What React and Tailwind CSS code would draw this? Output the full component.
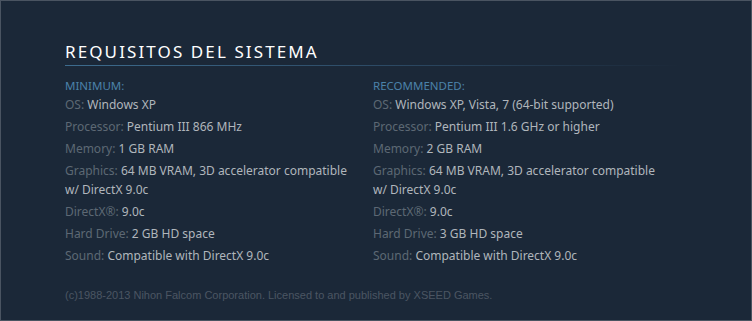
import React from "react";

const minimum = [
  ["OS:", "Windows XP"],
  ["Processor:", "Pentium III 866 MHz"],
  ["Memory:", "1 GB RAM"],
  ["Graphics:", "64 MB VRAM, 3D accelerator compatible w/ DirectX 9.0c"],
  ["DirectX®:", "9.0c"],
  ["Hard Drive:", "2 GB HD space"],
  ["Sound:", "Compatible with DirectX 9.0c"],
];

const recommended = [
  ["OS:", "Windows XP, Vista, 7 (64-bit supported)"],
  ["Processor:", "Pentium III 1.6 GHz or higher"],
  ["Memory:", "2 GB RAM"],
  ["Graphics:", "64 MB VRAM, 3D accelerator compatible w/ DirectX 9.0c"],
  ["DirectX®:", "9.0c"],
  ["Hard Drive:", "3 GB HD space"],
  ["Sound:", "Compatible with DirectX 9.0c"],
];

function ReqColumn({ title, items }) {
  return (
    <div className="w-[284px]">
      <div className="text-[11.5px] leading-[18px] uppercase text-[#4b82a9]">{title}</div>
      <ul>
        {items.map(([label, value]) => (
          <li key={label} className="text-[12px] leading-[19px] mb-[3px]">
            <span className="text-[#5d6874]">{label}</span>{" "}
            <span className="text-[#b0b6bc]">{value}</span>
          </li>
        ))}
      </ul>
    </div>
  );
}

export default function App() {
  return (
    <div
      className="w-[752px] h-[321px] bg-[#1b2838] border border-[#4a5461] overflow-hidden"
      style={{ fontFamily: '"Noto Sans", Arial, sans-serif' }}
    >
      <div className="ml-[64px] w-[616px] pt-[39px]">
        <h2 className="text-[17px] leading-[24px] tracking-[2.1px] text-white uppercase">
          Requisitos del sistema
        </h2>
        <div className="h-px mt-[1px] bg-gradient-to-r from-[#3d6c8e] via-[#2d4b66] to-transparent" />

        <div className="grid grid-cols-2 mt-[11px]">
          <ReqColumn title="Minimum:" items={minimum} />
          <ReqColumn title="Recommended:" items={recommended} />
        </div>

        <p
          className="mt-[20px] text-[11px] leading-[14px] text-[#4b5663]"
          style={{ fontFamily: '"Liberation Sans", Arial, sans-serif' }}
        >
          (c)1988-2013 Nihon Falcom Corporation. Licensed to and published by XSEED Games.
        </p>
      </div>
    </div>
  );
}
